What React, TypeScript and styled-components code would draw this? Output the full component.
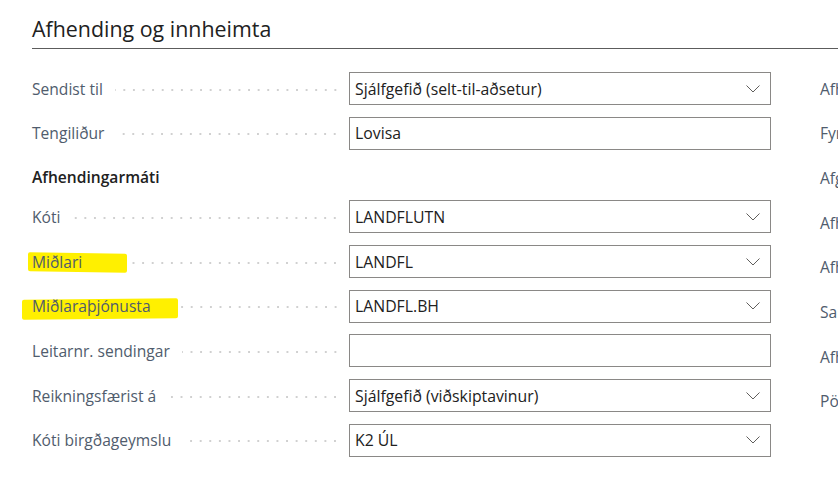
import React from 'react';
import styled, { createGlobalStyle } from 'styled-components';

const GlobalStyle = createGlobalStyle`
  html, body {
    margin: 0;
    padding: 0;
    background: #ffffff;
  }
  body {
    font-family: 'Open Sans', 'Noto Sans', 'Liberation Sans', sans-serif;
    overflow: hidden;
  }
`;

const Page = styled.div`
  width: 838px;
  height: 487px;
  overflow: hidden;
  padding-left: 32px;
  box-sizing: border-box;
`;

const SectionTitle = styled.h2`
  margin: 0;
  padding-top: 16px;
  height: 32px;
  font-size: 21.4px;
  font-weight: 400;
  line-height: 26px;
  color: #212121;
  border-bottom: 1px solid #5c5c5c;
  white-space: nowrap;
`;

const Columns = styled.div`
  display: flex;
  gap: 49px;
  margin-top: 23px;
`;

const LeftColumn = styled.div`
  flex: 0 0 739px;
  display: flex;
  flex-direction: column;
`;

const RightColumn = styled.div`
  display: flex;
  flex-direction: column;
  white-space: nowrap;
`;

const FieldRow = styled.div`
  display: grid;
  grid-template-columns: 317px 422px;
  align-items: center;
  height: 33px;
  margin-bottom: 11.7px;
`;

const GroupHeading = styled.div`
  box-sizing: border-box;
  height: 39px;
  line-height: 20px;
  padding-top: 6px;
  font-size: 15.6px;
  font-weight: 600;
  color: #212121;
`;

const Label = styled.div`
  display: flex;
  align-items: center;
  font-size: 15.6px;
  color: #505c6d;
  line-height: 20px;

  &::after {
    content: '';
    flex: 1;
    height: 2px;
    margin: 2px 9px 0 12px;
    background-image: radial-gradient(circle, #d0d0d0 1px, transparent 1.2px);
    background-size: 9.6px 2px;
    background-repeat: repeat-x;
    background-position: right center;
  }
`;

const LabelText = styled.span`
  position: relative;
  z-index: 0;
  white-space: nowrap;
`;

const Highlight = styled.span<{ $left: number; $top: number; $width: number; $height: number; $tilt: number }>`
  position: absolute;
  z-index: -1;
  left: ${(p) => p.$left}px;
  top: ${(p) => p.$top}px;
  width: ${(p) => p.$width}px;
  height: ${(p) => p.$height}px;
  background: #fff000;
  border-radius: 2px;
  transform: skewY(${(p) => p.$tilt}deg);
`;

const Box = styled.div`
  position: relative;
  height: 33px;
  box-sizing: border-box;
  border: 1px solid #8a8886;
  padding: 0 36px 0 5px;
  display: flex;
  align-items: center;
  font-size: 15.8px;
  color: #212121;
  white-space: nowrap;
`;

const Chevron = styled.svg`
  position: absolute;
  right: 10px;
  top: 50%;
  margin-top: -4px;
  width: 14px;
  height: 8px;
`;

const RightLabel = styled.div`
  height: 33px;
  margin-bottom: 11.7px;
  display: flex;
  align-items: center;
  font-size: 15.6px;
  color: #505c6d;
`;

type Mark = { left: number; top: number; width: number; height: number; tilt: number };

type Field =
  | { kind: 'heading'; text: string }
  | { kind: 'field'; label: string; value: string; lookup?: boolean; mark?: Mark };

const fields: Field[] = [
  { kind: 'field', label: 'Sendist til', value: 'Sjálfgefið (selt-til-aðsetur)', lookup: true },
  { kind: 'field', label: 'Tengiliður', value: 'Lovisa' },
  { kind: 'heading', text: 'Afhendingarmáti' },
  { kind: 'field', label: 'Kóti', value: 'LANDFLUTN', lookup: true },
  {
    kind: 'field',
    label: 'Miðlari',
    value: 'LANDFL',
    lookup: true,
    mark: { left: -4, top: 1, width: 99, height: 19, tilt: 1 },
  },
  {
    kind: 'field',
    label: 'Miðlaraþjónusta',
    value: 'LANDFL.BH',
    lookup: true,
    mark: { left: -10, top: 3, width: 156, height: 20, tilt: -0.6 },
  },
  { kind: 'field', label: 'Leitarnr. sendingar', value: '' },
  { kind: 'field', label: 'Reikningsfærist á', value: 'Sjálfgefið (viðskiptavinur)', lookup: true },
  { kind: 'field', label: 'Kóti birgðageymslu', value: 'K2 ÚL', lookup: true },
];

const rightLabels = [
  'Afhendingardagsetning',
  'Fyrirhuguð afhending',
  'Afgreiðslutími',
  'Afhendingartími',
  'Afhendingarháttur',
  'Samsetning',
  'Afhending',
  'Pöntun',
];

const ChevronIcon = () => (
  <Chevron viewBox="0 0 14 8">
    <polyline points="0.5,0.5 7,7 13.5,0.5" fill="none" stroke="#605e5c" strokeWidth="1" />
  </Chevron>
);

export default function App() {
  return (
    <>
      <GlobalStyle />
      <Page>
        <SectionTitle>Afhending og innheimta</SectionTitle>
        <Columns>
          <LeftColumn>
            {fields.map((f, i) =>
              f.kind === 'heading' ? (
                <GroupHeading key={i}>{f.text}</GroupHeading>
              ) : (
                <FieldRow key={i}>
                  <Label>
                    <LabelText>
                      {f.mark && (
                        <Highlight
                          $left={f.mark.left}
                          $top={f.mark.top}
                          $width={f.mark.width}
                          $height={f.mark.height}
                          $tilt={f.mark.tilt}
                        />
                      )}
                      {f.label}
                    </LabelText>
                  </Label>
                  <Box>
                    {f.value}
                    {f.lookup && <ChevronIcon />}
                  </Box>
                </FieldRow>
              )
            )}
          </LeftColumn>
          <RightColumn>
            {rightLabels.map((l) => (
              <RightLabel key={l}>{l}</RightLabel>
            ))}
          </RightColumn>
        </Columns>
      </Page>
    </>
  );
}
